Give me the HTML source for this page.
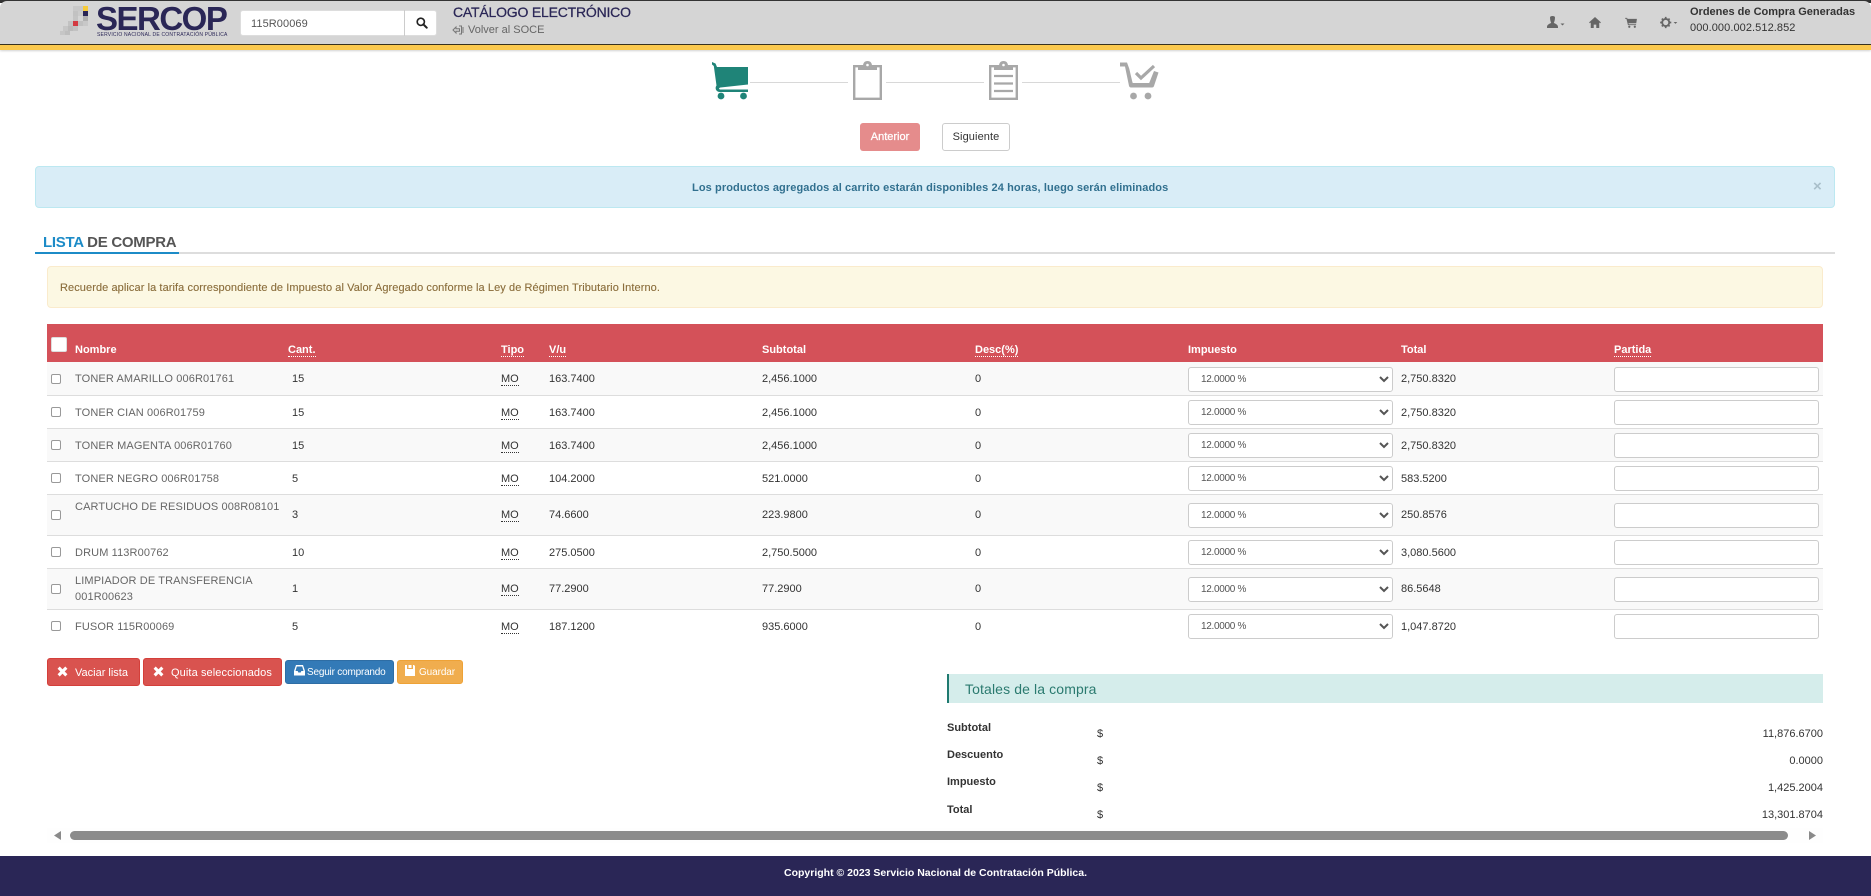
<!DOCTYPE html>
<html lang="es"><head><meta charset="utf-8"><title>Catálogo Electrónico</title>
<style>
*{box-sizing:border-box}
html,body{margin:0;padding:0;width:1871px;height:896px;overflow:hidden;background:#fff;font-family:"Liberation Sans",sans-serif;font-size:11px;color:#333}
.a{position:absolute;white-space:nowrap}
svg{position:absolute;display:block}
.row{position:absolute;left:47px;width:1776px;border-bottom:1px solid #ddd;color:#333}
.row.o{background:#f9f9f9}
.row .c{position:absolute;top:0;height:100%;display:flex;align-items:center;white-space:nowrap}
.row.p .c{padding-top:1px}
.cb{position:absolute;left:4px;width:10px;height:10px;border:1px solid #999;border-radius:2px;background:#fff}
.nm{left:28px;color:#666;font-size:11px;letter-spacing:.12px}
abbr{text-decoration:none;border-bottom:1px dotted currentColor;line-height:11px;display:inline-block}
.row abbr{margin-top:2px}
.sel{position:absolute;left:1141px;width:205px;height:25px;border:1px solid #ccc;border-radius:3px;background:#fff;font:10px "Liberation Sans",sans-serif;letter-spacing:-.3px;color:#555;padding-left:8px;margin:0}
.inp{position:absolute;left:1567px;width:205px;height:25px;border:1px solid #ccc;border-radius:3px;background:#fff}
.th{position:absolute;top:344px;color:#fff;font-weight:bold;font-size:11px;line-height:13px;white-space:nowrap}
.th abbr{line-height:12px}
.btn{position:absolute;border-radius:3px;color:#fff;white-space:nowrap}
.lab{position:absolute;left:947px;font-weight:bold;color:#333;font-size:11px;line-height:13px}
.dol{position:absolute;left:1097px;font-size:11px;line-height:13px;color:#333}
.val{position:absolute;right:48px;font-size:11px;line-height:13px;color:#333}
</style></head><body>

<!-- header -->
<div class="a" style="left:0;top:0;width:1871px;height:3px;background:#333"></div>
<div class="a" style="left:0;top:1px;width:1871px;height:44px;background:#d5d5d5;border-radius:7px 7px 0 0;border-bottom:1px solid #3a3420"></div>
<div class="a" style="left:0;top:45px;width:1871px;height:5px;background:#fbc94e;box-shadow:0 1px 2px rgba(0,0,0,.18)"></div>

<!-- logo mosaic -->
<svg style="left:58px;top:3px" width="32" height="32" viewBox="0 0 32 32">
<rect x="15" y="3" width="5" height="5" fill="#c8c8c8"/><rect x="20" y="3" width="5" height="5" fill="#c8c8c8"/><rect x="25" y="3" width="5" height="5" fill="#f6cb3a"/>
<rect x="15" y="8" width="5" height="5" fill="#c2c2c2"/><rect x="20" y="8" width="5" height="5" fill="#cbcbcb"/><rect x="25" y="8" width="5" height="5" fill="#2a2656"/>
<rect x="15" y="13" width="5" height="5" fill="#c4c4c4"/><rect x="25" y="13" width="5" height="5" fill="#b0b0b0"/>
<rect x="10" y="18" width="5" height="5" fill="#c2c2c2"/><rect x="15" y="18" width="5" height="5" fill="#d33a42"/><rect x="20" y="18" width="5" height="5" fill="#c0c0c0"/><rect x="25" y="18" width="5" height="5" fill="#c8c8c8"/>
<rect x="5" y="23" width="5" height="5" fill="#c6c6c6"/><rect x="10" y="23" width="5" height="5" fill="#bbb"/><rect x="15" y="23" width="5" height="5" fill="#c2c2c2"/>
<rect x="2" y="28" width="5" height="4" fill="#c6c6c6"/><rect x="7" y="28" width="5" height="4" fill="#bebebe"/>
</svg>
<div class="a" style="left:96px;top:1px;font-weight:bold;font-size:33px;line-height:36px;letter-spacing:-1.5px;color:#2a2656">SERCOP</div>
<div class="a" style="left:97px;top:32px;font-size:5px;line-height:6px;letter-spacing:.2px;color:#2a2656">SERVICIO NACIONAL DE CONTRATACIÓN PÚBLICA</div>

<!-- search -->
<div class="a" style="left:240px;top:10px;width:197px;height:26px;background:#fff;border-radius:3px;border:1px solid #ddd"></div>
<div class="a" style="left:404px;top:10px;width:1px;height:26px;background:#ccc"></div>
<div class="a" style="left:251px;top:17px;font-size:11px;line-height:14px;letter-spacing:.08px;color:#555">115R00069</div>
<svg style="left:416px;top:17px" width="12" height="12" viewBox="0 0 13 13"><circle cx="5.2" cy="5.2" r="3.9" fill="none" stroke="#222" stroke-width="1.8"/><path d="M8 8l3.600 3.600" stroke="#222" stroke-width="2.200" stroke-linecap="round"/></svg>
<div class="a" style="left:453px;top:4px;font-size:14px;line-height:16px;letter-spacing:-.2px;-webkit-text-stroke:.25px #2a2656;color:#2a2656">CATÁLOGO ELECTRÓNICO</div>
<svg style="left:452px;top:24px" width="14" height="12" viewBox="0 0 14 12"><path d="M1 6l3-3v1.800h3.500v2.400H4V9zM7 2h2.500v8H7M11 3v6" fill="none" stroke="#777" stroke-width="1"/></svg>
<div class="a" style="left:468px;top:23px;font-size:11px;line-height:14px;color:#666">Volver al SOCE</div>

<!-- header right icons -->
<svg style="left:1546px;top:16px" width="20" height="13" viewBox="0 0 20 13"><path d="M4 1.500C4 .6 5 0 6.500 0S9 .6 9 1.500C9 4 8.200 6 7.800 7c2 .8 4.200 1.800 4.200 4v1H1v-1c0-2.200 2.200-3.200 4.200-4C4.800 6 4 4 4 1.500z" fill="#666"/><path d="M14.500 7.500h4l-2 2z" fill="#666"/></svg>
<svg style="left:1589px;top:17px" width="12" height="11" viewBox="0 0 14 13"><path d="M7 0l7 6.400-.9 1L12 6.500V13H8.500V9h-3v4H2V6.500L.9 7.400 0 6.400z" fill="#666"/></svg>
<svg style="left:1625px;top:17px" width="12" height="11" viewBox="0 0 14 13"><path d="M0 1h2.400l.5 1.200H14l-.8 5.200H4l.3 1.200H13v1H3.400L1.600 2H0z" fill="#666"/><circle cx="5" cy="11.500" r="1.300" fill="#666"/><circle cx="11.500" cy="11.500" r="1.300" fill="#666"/></svg>
<svg style="left:1659px;top:16px" width="19" height="13" viewBox="0 0 20 14"><circle cx="7" cy="7" r="3.800" fill="none" stroke="#666" stroke-width="2"/><path d="M7 1v2M7 11v2M1 7h2M11 7h2M2.800 2.800l1.400 1.400M9.800 9.800l1.400 1.400M2.800 11.200l1.400-1.400M9.800 4.200l1.400-1.400" stroke="#666" stroke-width="1.800"/><path d="M15.500 6.500h4l-2 2z" fill="#666"/></svg>
<div class="a" style="left:1690px;top:5px;font-size:11px;line-height:14px;color:#333;font-weight:bold">Ordenes de Compra Generadas</div>
<div class="a" style="left:1690px;top:21px;font-size:11px;line-height:14px;letter-spacing:.08px;color:#333">000.000.002.512.852</div>

<!-- steps -->
<div class="a" style="left:750px;top:82px;width:98px;height:1px;background:#d8d8d8"></div>
<div class="a" style="left:886px;top:82px;width:98px;height:1px;background:#d8d8d8"></div>
<div class="a" style="left:1022px;top:82px;width:98px;height:1px;background:#d8d8d8"></div>
<svg style="left:712px;top:61px" width="38" height="40" viewBox="0 0 38 40"><path d="M0 1l3.500 1.500L5 6h31v17.500L8.500 26.500c-1.500.2-2 1.500-.5 2h28v2.500H8c-4 0-5.500-4-3.500-6.500L1.800 5 0 3.500z" fill="#1f8478"/><circle cx="9" cy="35" r="3.400" fill="#1f8478"/><circle cx="31.500" cy="35" r="3.400" fill="#1f8478"/></svg>
<svg style="left:853px;top:61px" width="29" height="39" viewBox="0 0 29 39"><path d="M1.200 5.200h26.600v32.600H1.200z" fill="none" stroke="#a8a8a8" stroke-width="2.400"/><path d="M5 5h5c0-3 1.500-5 4.500-5S19 2 19 5h5v4H5z" fill="#a8a8a8"/><circle cx="14.500" cy="4" r="1.300" fill="#fff"/></svg>
<svg style="left:989px;top:61px" width="29" height="39" viewBox="0 0 29 39"><path d="M1.200 5.200h26.600v32.600H1.200z" fill="none" stroke="#a8a8a8" stroke-width="2.400"/><path d="M5 5h5c0-3 1.500-5 4.500-5S19 2 19 5h5v4H5z" fill="#a8a8a8"/><circle cx="14.500" cy="4" r="1.300" fill="#fff"/><path d="M5 15h19M5 22.500h19M5 30h19" stroke="#a8a8a8" stroke-width="2.200"/></svg>
<svg style="left:1120px;top:61px" width="40" height="40" viewBox="0 0 40 40"><path d="M0 1.500h7l2.200 6c.8 3 2.500 11 3.500 14.500h16.500L34 10l4.500 1.500-4.500 13.500c-.3 1-1 1.500-2 1.500H11c-1 0-1.800-.6-2-1.600L5 5.500H0z" fill="#a8a8a8"/><path d="M16 12l5 5L34 5" fill="none" stroke="#a8a8a8" stroke-width="3.200"/><circle cx="13.500" cy="35" r="3.400" fill="#a8a8a8"/><circle cx="28" cy="35" r="3.400" fill="#a8a8a8"/></svg>

<div class="btn" style="left:860px;top:123px;width:60px;height:28px;background:#e58c8c;font-size:11px;-webkit-text-stroke:.25px #fff;line-height:29px;text-align:center">Anterior</div>
<div class="btn" style="left:942px;top:123px;width:68px;height:28px;background:#fff;border:1px solid #ccc;color:#333;font-size:11px;letter-spacing:.1px;line-height:27px;text-align:center">Siguiente</div>

<!-- alert -->
<div class="a" style="left:35px;top:166px;width:1800px;height:42px;background:#d9edf7;border:1px solid #bce8f1;border-radius:4px"></div>
<div class="a" style="left:692px;top:181px;font-size:11px;line-height:14px;font-weight:bold;letter-spacing:.1px;color:#31708f">Los productos agregados al carrito estarán disponibles 24 horas, luego serán eliminados</div>
<div class="a" style="left:1813px;top:179px;font-size:15px;line-height:15px;font-weight:bold;color:#a9bfca">×</div>

<!-- heading -->
<div class="a" style="left:35px;top:252px;width:1800px;height:2px;background:#ddd"></div>
<div class="a" style="left:35px;top:252px;width:144px;height:2px;background:#1c8bc7"></div>
<div class="a" style="left:43px;top:234px;font-size:15px;line-height:18px;font-weight:bold;letter-spacing:-.28px;color:#555"><span style="color:#1c8bc7">LISTA</span> DE COMPRA</div>

<!-- warning -->
<div class="a" style="left:47px;top:266px;width:1776px;height:42px;background:#fcf8e3;border:1px solid #faebcc;border-radius:4px"></div>
<div class="a" style="left:60px;top:281px;font-size:11px;line-height:14px;letter-spacing:.08px;-webkit-text-stroke:.12px #8a6d3b;color:#8a6d3b">Recuerde aplicar la tarifa correspondiente de Impuesto al Valor Agregado conforme la Ley de Régimen Tributario Interno.</div>

<!-- table header -->
<div class="a" style="left:47px;top:324px;width:1776px;height:38px;background:#d45159"></div>
<div class="a" style="left:51px;top:337px;width:16px;height:15px;background:#fff;border:1px solid #ddd;border-radius:2px"></div>
<div class="th" style="left:75px">Nombre</div>
<div class="th" style="left:288px"><abbr>Cant.</abbr></div>
<div class="th" style="left:501px"><abbr>Tipo</abbr></div>
<div class="th" style="left:549px"><abbr>V/u</abbr></div>
<div class="th" style="left:762px">Subtotal</div>
<div class="th" style="left:975px"><abbr>Desc(%)</abbr></div>
<div class="th" style="left:1188px">Impuesto</div>
<div class="th" style="left:1401px">Total</div>
<div class="th" style="left:1614px"><abbr>Partida</abbr></div>

<!-- rows -->
<div class="row o" style="top:362px;height:34px"><i class="cb" style="top:12px"></i><div class="c nm">TONER AMARILLO 006R01761</div><div class="c" style="left:245px">15</div><div class="c" style="left:454px"><abbr>MO</abbr></div><div class="c" style="left:502px">163.7400</div><div class="c" style="left:715px">2,456.1000</div><div class="c" style="left:928px">0</div><select class="sel" style="top:5px"><option>12.0000 %</option></select><div class="c" style="left:1354px">2,750.8320</div><input class="inp" style="top:5px"></div>
<div class="row p" style="top:396px;height:33px"><i class="cb" style="top:11px"></i><div class="c nm">TONER CIAN 006R01759</div><div class="c" style="left:245px">15</div><div class="c" style="left:454px"><abbr>MO</abbr></div><div class="c" style="left:502px">163.7400</div><div class="c" style="left:715px">2,456.1000</div><div class="c" style="left:928px">0</div><select class="sel" style="top:4px"><option>12.0000 %</option></select><div class="c" style="left:1354px">2,750.8320</div><input class="inp" style="top:4px"></div>
<div class="row o p" style="top:429px;height:33px"><i class="cb" style="top:11px"></i><div class="c nm">TONER MAGENTA 006R01760</div><div class="c" style="left:245px">15</div><div class="c" style="left:454px"><abbr>MO</abbr></div><div class="c" style="left:502px">163.7400</div><div class="c" style="left:715px">2,456.1000</div><div class="c" style="left:928px">0</div><select class="sel" style="top:4px"><option>12.0000 %</option></select><div class="c" style="left:1354px">2,750.8320</div><input class="inp" style="top:4px"></div>
<div class="row p" style="top:462px;height:33px"><i class="cb" style="top:11px"></i><div class="c nm">TONER NEGRO 006R01758</div><div class="c" style="left:245px">5</div><div class="c" style="left:454px"><abbr>MO</abbr></div><div class="c" style="left:502px">104.2000</div><div class="c" style="left:715px">521.0000</div><div class="c" style="left:928px">0</div><select class="sel" style="top:4px"><option>12.0000 %</option></select><div class="c" style="left:1354px">583.5200</div><input class="inp" style="top:4px"></div>
<div class="row o" style="top:495px;height:41px"><i class="cb" style="top:15px"></i><div class="c nm" style="top:5px;height:14px">CARTUCHO DE RESIDUOS 008R08101</div><div class="c" style="left:245px">3</div><div class="c" style="left:454px"><abbr>MO</abbr></div><div class="c" style="left:502px">74.6600</div><div class="c" style="left:715px">223.9800</div><div class="c" style="left:928px">0</div><select class="sel" style="top:8px"><option>12.0000 %</option></select><div class="c" style="left:1354px">250.8576</div><input class="inp" style="top:8px"></div>
<div class="row p" style="top:536px;height:33px"><i class="cb" style="top:11px"></i><div class="c nm">DRUM 113R00762</div><div class="c" style="left:245px">10</div><div class="c" style="left:454px"><abbr>MO</abbr></div><div class="c" style="left:502px">275.0500</div><div class="c" style="left:715px">2,750.5000</div><div class="c" style="left:928px">0</div><select class="sel" style="top:4px"><option>12.0000 %</option></select><div class="c" style="left:1354px">3,080.5600</div><input class="inp" style="top:4px"></div>
<div class="row o" style="top:569px;height:41px"><i class="cb" style="top:15px"></i><div class="c nm" style="top:5px;height:14px">LIMPIADOR DE TRANSFERENCIA</div><div class="c nm" style="top:21px;height:14px">001R00623</div><div class="c" style="left:245px">1</div><div class="c" style="left:454px"><abbr>MO</abbr></div><div class="c" style="left:502px">77.2900</div><div class="c" style="left:715px">77.2900</div><div class="c" style="left:928px">0</div><select class="sel" style="top:8px"><option>12.0000 %</option></select><div class="c" style="left:1354px">86.5648</div><input class="inp" style="top:8px"></div>
<div class="row" style="top:610px;height:33px;border-bottom:0"><i class="cb" style="top:11px"></i><div class="c nm">FUSOR 115R00069</div><div class="c" style="left:245px">5</div><div class="c" style="left:454px"><abbr>MO</abbr></div><div class="c" style="left:502px">187.1200</div><div class="c" style="left:715px">935.6000</div><div class="c" style="left:928px">0</div><select class="sel" style="top:4px"><option>12.0000 %</option></select><div class="c" style="left:1354px">1,047.8720</div><input class="inp" style="top:4px"></div>

<!-- action buttons -->
<div class="btn" style="left:47px;top:658px;width:93px;height:28px;background:#d9534f;border:1px solid #d43f3a;font-size:11px;line-height:28px;padding-left:27px">Vaciar lista</div>
<svg style="left:57px;top:666px" width="11" height="11" viewBox="0 0 10 10"><path d="M1.500 1.500l7 7M8.500 1.500l-7 7" stroke="#fff" stroke-width="2.800"/></svg>
<div class="btn" style="left:143px;top:658px;width:139px;height:28px;background:#d9534f;border:1px solid #d43f3a;font-size:11px;line-height:28px;padding-left:27px;letter-spacing:.1px">Quita seleccionados</div>
<svg style="left:153px;top:666px" width="11" height="11" viewBox="0 0 10 10"><path d="M1.500 1.500l7 7M8.500 1.500l-7 7" stroke="#fff" stroke-width="2.800"/></svg>
<div class="btn" style="left:285px;top:660px;width:109px;height:24px;background:#337ab7;border:1px solid #2e6da4;font-size:10px;letter-spacing:-.2px;line-height:24px;padding-left:21px">Seguir comprando</div>
<svg style="left:294px;top:665px" width="11" height="11" viewBox="0 0 11 11"><path d="M2 0h7l2 6v4.500H0V6z" fill="#fff"/><path d="M2.800 1.500h5.400L9.500 6H7.300L6.700 7.500H4.300L3.700 6H1.500z" fill="#337ab7"/></svg>
<div class="btn" style="left:397px;top:660px;width:66px;height:24px;background:#f0ad4e;border:1px solid #eea236;font-size:10px;letter-spacing:-.1px;line-height:24px;padding-left:21px">Guardar</div>
<svg style="left:405px;top:665px" width="10" height="11" viewBox="0 0 10 11"><path d="M0 0h2v4h6V0h1l1 1v10H0z" fill="#fff"/><rect x="3.500" y="0" width="3" height="3" fill="#fff"/></svg>

<!-- totals -->
<div class="a" style="left:947px;top:674px;width:876px;height:29px;background:#d5edeb;border-left:2px solid #1f7a70"></div>
<div class="a" style="left:965px;top:681px;font-size:14px;line-height:17px;letter-spacing:.12px;color:#2a7a6f">Totales de la compra</div>
<div class="lab" style="top:722px">Subtotal</div><div class="dol" style="top:728px">$</div><div class="val" style="top:728px">11,876.6700</div>
<div class="lab" style="top:749px">Descuento</div><div class="dol" style="top:755px">$</div><div class="val" style="top:755px">0.0000</div>
<div class="lab" style="top:776px">Impuesto</div><div class="dol" style="top:782px">$</div><div class="val" style="top:782px">1,425.2004</div>
<div class="lab" style="top:804px">Total</div><div class="dol" style="top:809px">$</div><div class="val" style="top:809px">13,301.8704</div>

<!-- scrollbar -->
<div class="a" style="left:47px;top:828px;width:1776px;height:15px;background:#fefefe"></div>
<div class="a" style="left:70px;top:831px;width:1718px;height:9px;background:#8c8c8c;border-radius:5px"></div>
<svg style="left:54px;top:831px" width="8" height="9" viewBox="0 0 8 9"><path d="M7 0v9L0 4.500z" fill="#8a8a8a"/></svg>
<svg style="left:1808px;top:831px" width="8" height="9" viewBox="0 0 8 9"><path d="M1 0v9l7-4.500z" fill="#8a8a8a"/></svg>

<!-- footer -->
<div class="a" style="left:0;top:856px;width:1871px;height:40px;background:#2a2656"></div>
<div class="a" style="left:784px;top:866px;font-size:10.5px;line-height:14px;font-weight:bold;color:#fff">Copyright © 2023 Servicio Nacional de Contratación Pública.</div>
</body></html>
